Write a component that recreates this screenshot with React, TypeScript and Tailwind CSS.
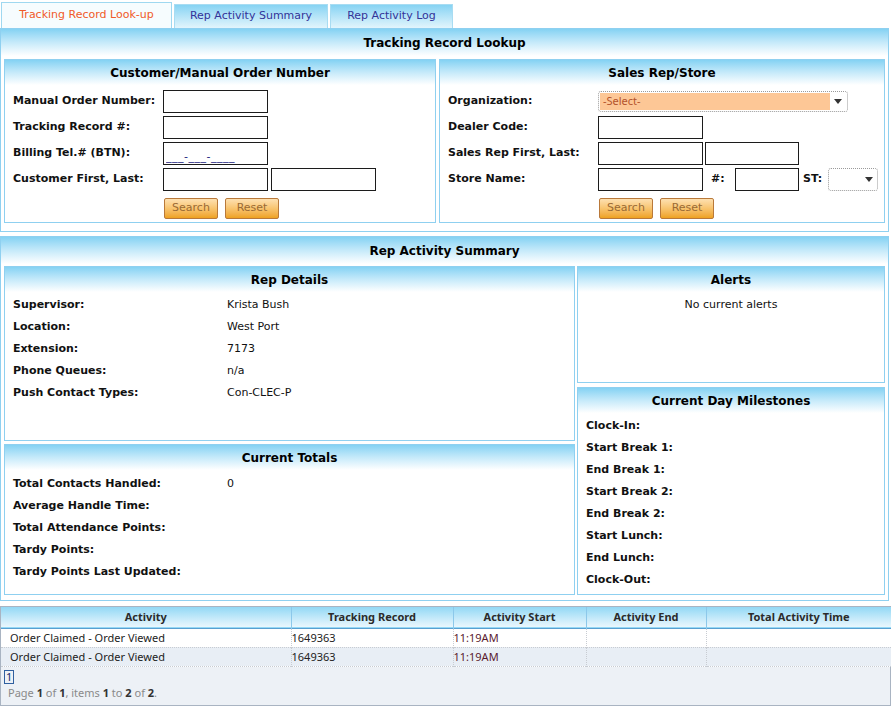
import React from "react";

const band = "flex items-center justify-center bg-linear-to-b from-[#84d2f3] via-[#c6eafa] to-white font-bold text-[12px] text-black";
const box = "border border-[#8fd0f0] bg-white";

function Band({ title, className = "" }: { title: string; className?: string }) {
  return <div className={`${band} ${className}`}>{title}</div>;
}

function Field({ w = "w-[105px]", value }: { w?: string; value?: string }) {
  return (
    <input
      type="text"
      defaultValue={value}
      className={`h-[23px] ${w} border border-[#1c1c1c] bg-white px-[2px] pt-[5px] text-[11px] tracking-[0.5px] text-[#1a237e] outline-none`}
    />
  );
}

function Arrow() {
  return (
    <svg width="8" height="5" viewBox="0 0 8 5" className="shrink-0">
      <path d="M0 0h8L4 5z" fill="#333" />
    </svg>
  );
}

function Btns() {
  return (
    <div className="flex gap-[7px] pl-[159px] pt-[7px]">
      {["Search", "Reset"].map((b) => (
        <button
          key={b}
          className="h-[21px] w-[54px] rounded-[2px] border border-[#b9793a] bg-linear-to-b from-[#fde0b0] via-[#f8c46e] to-[#eea21e] text-[11px] text-[#9a6a34]"
        >
          {b}
        </button>
      ))}
    </div>
  );
}

function Row({ label, children }: { label: string; children?: React.ReactNode }) {
  return (
    <div className="flex h-[23px] items-center">
      <div className="w-[158px] shrink-0 whitespace-nowrap pl-[8px] font-bold">{label}</div>
      <div className="flex items-center gap-[3px]">{children}</div>
    </div>
  );
}

function Info({ label, value }: { label: string; value?: string }) {
  return (
    <div className="flex h-[22px] items-center pl-[8px]">
      <div className="w-[214px] shrink-0 whitespace-nowrap font-bold">{label}</div>
      <div>{value}</div>
    </div>
  );
}

const cols = [
  { t: "Activity", w: "w-[290px]" },
  { t: "Tracking Record", w: "w-[162px]" },
  { t: "Activity Start", w: "w-[133px]" },
  { t: "Activity End", w: "w-[120px]" },
  { t: "Total Activity Time", w: "w-[185px]" },
];

const rows = [
  ["Order Claimed - Order Viewed", "1649363", "11:19AM", "", ""],
  ["Order Claimed - Order Viewed", "1649363", "11:19AM", "", ""],
];

export default function App() {
  return (
    <div className="h-[706px] w-[895px] overflow-hidden bg-white font-['DejaVu_Sans',sans-serif] text-[11px] text-[#111]">
      {/* tabs */}
      <div className="flex h-[28px] items-end pl-[1px]">
        <div className="flex h-[26px] w-[171px] items-center justify-center border border-b-0 border-[#9fd8f0] bg-[#f6fcfe] text-[#f05a28]">
          Tracking Record Look-up
        </div>
        <div className="ml-[2px] flex h-[24px] w-[154px] items-center justify-center border border-b-0 border-[#a8dcf2] bg-linear-to-b from-[#86d3f3] to-[#e2f5fc] text-[#333399]">
          Rep Activity Summary
        </div>
        <div className="ml-[2px] flex h-[24px] w-[123px] items-center justify-center border border-b-0 border-[#a8dcf2] bg-linear-to-b from-[#86d3f3] to-[#e2f5fc] text-[#333399]">
          Rep Activity Log
        </div>
      </div>

      {/* lookup */}
      <div className={`${box} w-[889px] pb-[8px]`}>
        <Band title="Tracking Record Lookup" className="h-[27px]" />
        <div className="flex gap-[3px] px-[3px] pt-[3px]">
          <div className={`${box} h-[164px] w-[432px]`}>
            <Band title="Customer/Manual Order Number" className="h-[25px]" />
            <div className="flex flex-col gap-[3px] pt-[5px]">
              <Row label="Manual Order Number:"><Field /></Row>
              <Row label="Tracking Record #:"><Field /></Row>
              <Row label="Billing Tel.# (BTN):"><Field value="___-___-____" /></Row>
              <Row label="Customer First, Last:"><Field /><Field /></Row>
            </div>
            <Btns />
          </div>
          <div className={`${box} h-[164px] w-[446px]`}>
            <Band title="Sales Rep/Store" className="h-[25px]" />
            <div className="flex flex-col gap-[3px] pt-[5px]">
              <Row label="Organization:">
                <div className="flex h-[21px] w-[250px] items-center rounded-[3px] border border-dotted border-[#9a9a9a] bg-white p-[1px]">
                  <div className="flex h-full flex-1 items-center bg-[#fdc796] pl-[3px] font-['Noto_Sans',sans-serif] text-[11px] text-[#b4532c]">
                    -Select-
                  </div>
                  <div className="flex w-[16px] justify-center"><Arrow /></div>
                </div>
              </Row>
              <Row label="Dealer Code:"><Field /></Row>
              <Row label="Sales Rep First, Last:">
                <div className="flex gap-[2px]"><Field /><Field w="w-[94px]" /></div>
              </Row>
              <Row label="Store Name:">
                <Field />
                <span className="ml-[5px] w-[21px] font-bold">#:</span>
                <Field w="w-[64px]" />
                <span className="ml-[1px] w-[22px] font-bold">ST:</span>
                <div className="flex h-[23px] w-[50px] items-center justify-end rounded-[3px] border border-dotted border-[#9a9a9a] pr-[4px]">
                  <Arrow />
                </div>
              </Row>
            </div>
            <Btns />
          </div>
        </div>
      </div>

      {/* summary */}
      <div className={`${box} mt-[4px] w-[889px] pb-[5px]`}>
        <Band title="Rep Activity Summary" className="h-[27px]" />
        <div className="flex gap-[2px] px-[3px] pt-[2px]">
          <div className="flex w-[571px] flex-col gap-[3px]">
            <div className={`${box} h-[175px]`}>
              <Band title="Rep Details" className="h-[25px]" />
              <div className="pt-[2px]">
                <Info label="Supervisor:" value="Krista Bush" />
                <Info label="Location:" value="West Port" />
                <Info label="Extension:" value="7173" />
                <Info label="Phone Queues:" value="n/a" />
                <Info label="Push Contact Types:" value="Con-CLEC-P" />
              </div>
            </div>
            <div className={`${box} h-[151px]`}>
              <Band title="Current Totals" className="h-[25px]" />
              <div className="pt-[3px]">
                <Info label="Total Contacts Handled:" value="0" />
                <Info label="Average Handle Time:" />
                <Info label="Total Attendance Points:" />
                <Info label="Tardy Points:" />
                <Info label="Tardy Points Last Updated:" />
              </div>
            </div>
          </div>
          <div className="flex w-[308px] flex-col gap-[4px]">
            <div className={`${box} h-[117px]`}>
              <Band title="Alerts" className="h-[25px]" />
              <div className="flex h-[22px] items-center justify-center pt-[4px]">No current alerts</div>
            </div>
            <div className={`${box} h-[208px]`}>
              <Band title="Current Day Milestones" className="h-[25px]" />
              <div className="pt-[2px]">
                {["Clock-In:", "Start Break 1:", "End Break 1:", "Start Break 2:", "End Break 2:", "Start Lunch:", "End Lunch:", "Clock-Out:"].map((m) => (
                  <Info key={m} label={m} />
                ))}
              </div>
            </div>
          </div>
        </div>
      </div>

      {/* activity grid */}
      <div className="mt-[5px] w-[891px] border border-[#a9b4c2] font-['Noto_Sans',sans-serif] text-[11px]">
        <table className="w-full table-fixed border-collapse">
          <thead>
            <tr className="h-[21px] border-b border-[#5a9fd0] bg-linear-to-b from-[#92d8f5] to-[#eaf7fd]">
              {cols.map((c, i) => (
                <th
                  key={c.t}
                  className={`${c.w} p-0 text-center font-bold text-[#2b2b2b] ${i < cols.length - 1 ? "border-r border-[#8cc8ea]" : ""}`}
                >
                  {c.t}
                </th>
              ))}
            </tr>
          </thead>
          <tbody>
            {rows.map((r, ri) => (
              <tr key={ri} className={`h-[19px] border-b border-dotted border-[#c8ccd2] ${ri % 2 ? "bg-[#e8eef5]" : "bg-white"}`}>
                {r.map((v, ci) => (
                  <td
                    key={ci}
                    className={`p-0 leading-none ${ci === 0 ? "pl-[9px]" : ""} ${ci === 2 ? "text-[#5a1a2e]" : "text-[#222]"} ${ci < r.length - 1 ? "border-r border-dotted border-[#c8ccd2]" : ""}`}
                  >
                    {v}
                  </td>
                ))}
              </tr>
            ))}
          </tbody>
        </table>
        <div className="h-[38px] bg-[#edf1f6] pl-[3px] pt-[2px]">
          <span className="inline-block border border-[#3060a0] px-[1px] text-[11px] leading-[12px] text-[#1a2a6a]">1</span>
          <div className="pl-[4px] text-[#8a8a8a]">
            Page <b className="text-[#333]">1</b> of <b className="text-[#333]">1</b>, items <b className="text-[#333]">1</b> to{" "}
            <b className="text-[#333]">2</b> of <b className="text-[#333]">2</b>.
          </div>
        </div>
      </div>
    </div>
  );
}
